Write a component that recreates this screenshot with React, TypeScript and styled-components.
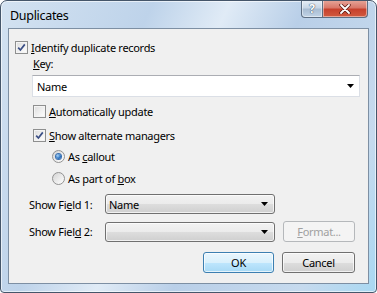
import React from "react";
import styled, {createGlobalStyle} from "styled-components";

const GlobalStyle = createGlobalStyle`
  html, body {
    margin: 0;
    padding: 0;
    background: #ffffff;
  }
  body {
    font-family: "Noto Sans", "Liberation Sans", sans-serif;
    font-size: 11px;
    color: #000;
  }
`;

const Window = styled.div`
  width: 377px;
  height: 293px;
  box-sizing: border-box;
  border: 1px solid #45566a;
  border-radius: 7px 7px 4px 4px;
  background: linear-gradient(115deg, #d3e2f1 0%, #bed3ea 30%, #e0ebf6 45%, #b9cfe8 60%, #c6daee 85%, #a9d8f2 100%);
  display: flex;
  flex-direction: column;
  padding: 0 7px 8px 7px;
  overflow: hidden;
  box-shadow: inset 0 0 0 1px rgba(255, 255, 255, 0.6);
`;

const TitleBar = styled.div`
  height: 27px;
  display: flex;
  justify-content: space-between;
  align-items: flex-start;
`;

const Caption = styled.div`
  padding: 6px 0 0 2px;
  font-size: 12.5px;
  letter-spacing: -0.3px;
  color: #000;
`;

const CaptionButtons = styled.div`
  display: flex;
  margin-right: 1px;
  margin-top: -1px;
`;

const CaptionButton = styled.div<{ $close?: boolean }>`
  width: ${p => (p.$close ? 45 : 22)}px;
  height: 18px;
  box-sizing: border-box;
  border: 1px solid #5d6e82;
  border-top: none;
  border-left: ${p => (p.$close ? "none" : "1px solid #5d6e82")};
  border-radius: ${p => (p.$close ? "0 0 4px 0" : "0 0 0 4px")};
  display: flex;
  align-items: center;
  justify-content: center;
  background: ${p =>
    p.$close
      ? "linear-gradient(#e7a89c 0%, #d9786a 45%, #c7412d 55%, #d15a3f 100%)"
      : "linear-gradient(#e9f0f7 0%, #c9d7e6 45%, #a9bdd3 55%, #c1d3e6 100%)"};
  box-shadow: inset 0 0 0 1px rgba(255, 255, 255, 0.45);
`;

const Client = styled.div`
  flex: 1;
  background: #f0f0f0;
  border: 1px solid #7d8fa3;
  display: flex;
  flex-direction: column;
`;

const Row = styled.label<{ $indent: number; $top: number }>`
  display: flex;
  align-items: center;
  height: 16px;
  margin-left: ${p => p.$indent}px;
  margin-top: ${p => p.$top}px;
  gap: 3px;
  letter-spacing: -0.3px;
`;

const Key = styled.span`
  text-decoration: underline;
  text-underline-offset: 1px;
`;

const Box = styled.span`
  width: 13px;
  height: 13px;
  box-sizing: border-box;
  border: 1px solid #8e8f8f;
  background: linear-gradient(135deg, #dcdcdc 0%, #f2f2f2 60%, #ffffff 100%);
  box-shadow: inset 0 0 0 1px #f4f4f4;
  display: flex;
  align-items: center;
  justify-content: center;
  flex-shrink: 0;
`;

const Radio = styled.span<{ $on?: boolean }>`
  width: 13px;
  height: 13px;
  box-sizing: border-box;
  border-radius: 50%;
  border: 1px solid #929292;
  background: linear-gradient(135deg, #d4d4d4 0%, #eeeeee 60%, #ffffff 100%);
  display: flex;
  align-items: center;
  justify-content: center;
  flex-shrink: 0;
  &::after {
    content: "";
    display: ${p => (p.$on ? "block" : "none")};
    width: 5px;
    height: 5px;
    border-radius: 50%;
    background: radial-gradient(circle at 35% 35%, #a9d4f7 0%, #2f76c4 55%, #174f96 100%);
    box-shadow: 0 0 0 1px #3a6fb0;
  }
`;

const Combo = styled.div`
  margin: 4px 8px 0 23px;
  height: 22px;
  box-sizing: border-box;
  background: #fff;
  border: 1px solid #dbdfe6;
  border-top-color: #abadb3;
  display: flex;
  align-items: center;
  justify-content: space-between;
  padding: 0 5px 0 4px;
  letter-spacing: -0.3px;
`;

const FieldGrid = styled.div`
  display: grid;
  grid-template-columns: 68px 170px 72px;
  column-gap: 8px;
  row-gap: 7px;
  align-items: center;
  margin: 8px 0 0 20px;
  letter-spacing: -0.3px;
`;

const DropDown = styled.div`
  height: 20px;
  box-sizing: border-box;
  border: 1px solid #707070;
  border-radius: 3px;
  background: linear-gradient(#f2f2f2 0%, #ebebeb 50%, #dddddd 51%, #cfcfcf 100%);
  box-shadow: inset 0 0 0 1px rgba(255, 255, 255, 0.7);
  display: flex;
  align-items: center;
  justify-content: space-between;
  padding: 0 6px 0 3px;
`;

const Button = styled.div<{ $width: number; $default?: boolean; $disabled?: boolean }>`
  width: ${p => p.$width}px;
  height: 21px;
  box-sizing: border-box;
  border-radius: 3px;
  border: 1px solid ${p => (p.$default ? "#3c7fb1" : p.$disabled ? "#b5b8bb" : "#707070")};
  background: ${p =>
    p.$disabled
      ? "#f4f4f4"
      : p.$default
      ? "linear-gradient(#eaf6fd 0%, #d9f0fc 50%, #bee6fd 51%, #a7d9f5 100%)"
      : "linear-gradient(#f2f2f2 0%, #ebebeb 50%, #dddddd 51%, #cfcfcf 100%)"};
  box-shadow: inset 0 0 0 1px ${p => (p.$disabled ? "#f4f4f4" : "rgba(255,255,255,0.7)")};
  color: ${p => (p.$disabled ? "#a0a0a0" : "#000")};
  display: flex;
  align-items: center;
  justify-content: center;
  letter-spacing: -0.3px;
`;

const ButtonRow = styled.div`
  display: flex;
  justify-content: flex-end;
  gap: 8px;
  margin: 10px 13px 0 0;
`;

const Arrow = () => (
  <svg width="7" height="4" viewBox="0 0 7 4">
    <path d="M0 0 H7 L3.5 4 Z" fill="#000" />
  </svg>
);

const Check = ({checked}: { checked?: boolean }) => (
  <Box>
    {checked && (
      <svg width="9" height="9" viewBox="0 0 9 9">
        <path d="M1.2 4.6 L3.4 7 L7.8 1.4" fill="none" stroke="#3b4f86" strokeWidth="1.7" />
      </svg>
    )}
  </Box>
);

const App = () => {
  return (
    <>
      <GlobalStyle />
      <Window>
        <TitleBar>
          <Caption>Duplicates</Caption>
          <CaptionButtons>
            <CaptionButton>
              <span style={{fontSize: 12, fontWeight: 700, color: "#fff", textShadow: "0 0 1px #34475e, 0 0 1px #34475e"}}>?</span>
            </CaptionButton>
            <CaptionButton $close>
              <svg width="12" height="10" viewBox="0 0 12 10">
                <path d="M2 1 L10 9 M10 1 L2 9" stroke="#5a1a12" strokeWidth="3.4" strokeLinecap="round" />
                <path d="M2 1 L10 9 M10 1 L2 9" stroke="#ffffff" strokeWidth="1.8" strokeLinecap="round" />
              </svg>
            </CaptionButton>
          </CaptionButtons>
        </TitleBar>
        <Client>
          <Row $indent={6} $top={10}>
            <Check checked />
            <span><Key>I</Key>dentify duplicate records</span>
          </Row>
          <Row $indent={24} $top={0}>
            <span><Key>K</Key>ey:</span>
          </Row>
          <Combo>
            <span>Name</span>
            <Arrow />
          </Combo>
          <Row $indent={24} $top={6}>
            <Check />
            <span><Key>A</Key>utomatically update</span>
          </Row>
          <Row $indent={24} $top={8}>
            <Check checked />
            <span><Key>S</Key>how alternate managers</span>
          </Row>
          <Row $indent={43} $top={5}>
            <Radio $on />
            <span>As <Key>c</Key>allout</span>
          </Row>
          <Row $indent={43} $top={6}>
            <Radio />
            <span>As part of <Key>b</Key>ox</span>
          </Row>
          <FieldGrid>
            <span>Show Fi<Key>e</Key>ld 1:</span>
            <DropDown>
              <span>Name</span>
              <Arrow />
            </DropDown>
            <span />
            <span>Show Fiel<Key>d</Key> 2:</span>
            <DropDown>
              <span />
              <Arrow />
            </DropDown>
            <Button $width={72} $disabled>
              <span><Key>F</Key>ormat...</span>
            </Button>
          </FieldGrid>
          <ButtonRow>
            <Button $width={71} $default>OK</Button>
            <Button $width={73}>Cancel</Button>
          </ButtonRow>
        </Client>
      </Window>
    </>
  );
};

export default App;
